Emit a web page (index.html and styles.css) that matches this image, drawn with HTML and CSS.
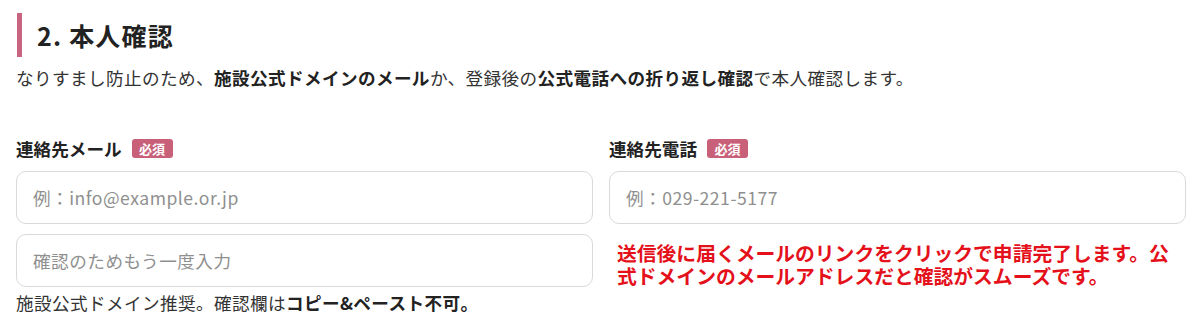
FILE: index.html
```html
<!DOCTYPE html>
<html lang="ja">
<head>
<meta charset="utf-8">
<link rel="stylesheet" href="styles.css">
</head>
<body>
<section class="section">
  <h2 class="heading">2. 本人確認</h2>
  <p class="lead">なりすまし防止のため、<b>施設公式ドメインのメール</b>か、登録後の<b>公式電話への折り返し確認</b>で本人確認します。</p>
  <div class="grid">
    <div class="col">
      <div class="label">連絡先メール<span class="badge">必須</span></div>
      <input class="field" type="text" placeholder="例：info@example.or.jp">
      <input class="field field-second" type="text" placeholder="確認のためもう一度入力">
      <p class="help">施設公式ドメイン推奨。確認欄は<b>コピー&amp;ペースト不可。</b></p>
    </div>
    <div class="col">
      <div class="label">連絡先電話<span class="badge">必須</span></div>
      <input class="field" type="text" placeholder="例：029-221-5177">
      <p class="notice">送信後に届くメールのリンクをクリックで申請完了します。公式ドメインのメールアドレスだと確認がスムーズです。</p>
    </div>
  </div>
</section>
</body>
</html>
```
FILE: styles.css
```css
html, body {
  margin: 0;
  padding: 0;
  background: #ffffff;
}
body {
  font-family: "Noto Sans CJK JP", "Noto Sans", sans-serif;
  color: #222222;
  font-size: 17.6px;
}
.section {
  padding: 13px 14px 0 16px;
}
.heading {
  margin: 0 0 0 1px;
  border-left: 5px solid #c8647f;
  padding-left: 15px;
  height: 44px;
  line-height: 44px;
  font-size: 25px;
  letter-spacing: 1.2px;
  font-weight: 700;
  color: #222222;
}
.lead {
  margin: 8px 0 0 0;
  line-height: 26px;
  font-size: 17.6px;
  letter-spacing: 0.4px;
  color: #333333;
}
.lead b, .help b {
  font-weight: 700;
  color: #222222;
}
.grid {
  margin-top: 45px;
  display: grid;
  grid-template-columns: 1fr 1fr;
  column-gap: 16px;
}
.col {
  display: flex;
  flex-direction: column;
}
.label {
  display: flex;
  align-items: center;
  height: 24px;
  font-weight: 700;
  font-size: 17.6px;
  color: #222222;
  margin-bottom: 11px;
}
.badge {
  display: inline-flex;
  align-items: center;
  justify-content: center;
  margin-left: 10px;
  width: 41px;
  height: 19px;
  border-radius: 3px;
  background: #c8607a;
  color: #ffffff;
  font-size: 13px;
  font-weight: 700;
}
.field {
  box-sizing: border-box;
  height: 53px;
  width: 100%;
  border: 1px solid #d9d9d9;
  border-radius: 10px;
  padding: 0 16px;
  font-family: "Noto Sans CJK JP", "Noto Sans", sans-serif;
  font-size: 17.6px;
  letter-spacing: 0.5px;
  color: #222222;
  background: #ffffff;
  outline: none;
}
.field::placeholder {
  color: #8f8f8f;
}
.field-second {
  margin-top: 10px;
}
.help {
  margin: 3px 0 0 0;
  line-height: 26px;
  font-size: 17.6px;
  letter-spacing: 0.4px;
  color: #333333;
}
.notice {
  margin: 17px 0 0 0;
  padding-left: 8px;
  line-height: 23px;
  font-size: 19.8px;
  font-weight: 700;
  color: #e4111b;
}
```
